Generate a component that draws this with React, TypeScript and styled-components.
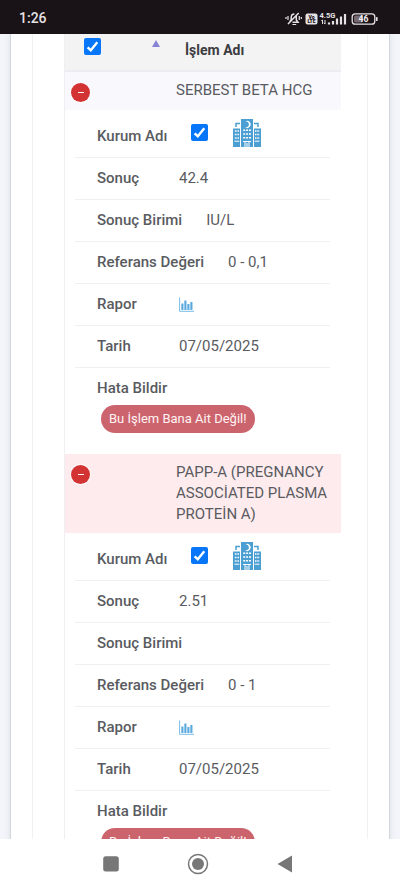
import React from "react";
import styled, { createGlobalStyle } from "styled-components";

const GlobalStyle = createGlobalStyle`
  *, *::before, *::after { box-sizing: border-box; }
  body {
    margin: 0;
    background: #f3f5fa;
    color: #595b61;
    font: 400 15px/21px Roboto, "Liberation Sans", sans-serif;
  }
`;

const Screen = styled.div`
  display: flex;
  flex-direction: column;
  height: 100vh;
  overflow: hidden;
`;

const StatusBar = styled.header`
  display: flex;
  align-items: center;
  justify-content: space-between;
  flex: none;
  height: 34px;
  padding: 3px 21px 0 19px;
  background: #191216;
  color: #e6e2e4;
`;

const Clock = styled.time`
  font-size: 14px;
  font-weight: 500;
`;

const StatusIcons = styled.svg`
  display: block;
  width: 94px;
  height: 18px;
`;

const Viewport = styled.main`
  flex: 1;
  min-height: 0;
  overflow: hidden;
  padding: 0 10px;
`;

const Page = styled.div`
  min-height: 100%;
  padding: 0 21px;
  background: #fff;
  border: solid #d3d6da;
  border-width: 0 1px;
  box-shadow: 0 0 6px rgba(60, 70, 90, 0.12);
`;

const Card = styled.section`
  padding: 0 26px 0 31px;
  border: solid #f0f1f3;
  border-width: 0 1px;
`;

const ResultTable = styled.table`
  width: 100%;
  table-layout: fixed;
  border-collapse: separate;
  border-spacing: 0;
  border-left: 1px solid #efeff2;
`;

const HeadCell = styled.th<{ $name?: boolean }>`
  width: ${(p) => (p.$name ? "auto" : "101px")};
  height: 38px;
  padding: ${(p) => (p.$name ? "5px 11px 9px 19px" : "4px 6px 10px 19px")};
  background: #f3f3f3;
  border-bottom: 2px solid #ececf2;
  color: #3c3c40;
  font-size: 14px;
  font-weight: 700;
  line-height: 22px;
  text-align: left;
  vertical-align: top;
`;

const HeadTools = styled.div`
  display: flex;
  align-items: flex-start;
  justify-content: space-between;
`;

const SortButton = styled.button`
  display: block;
  padding: 2px 0 0;
  border: 0;
  background: none;

  svg { display: block; }
`;

const Tick = styled.input`
  appearance: none;
  flex: none;
  width: 17px;
  height: 17px;
  margin: 0;
  border-radius: 2px;
  background: #c8c8c8;

  &:checked {
    background: #0876f8
      url("data:image/svg+xml,%3Csvg xmlns='http://www.w3.org/2000/svg' viewBox='0 0 17 17'%3E%3Cpath d='M3.6 9.3 6.8 12.2 13.3 4.2' fill='none' stroke='white' stroke-width='2.4'/%3E%3C/svg%3E");
  }
`;

const RowCell = styled.td<{ $tone: "plain" | "alert"; $name?: boolean }>`
  padding: ${(p) => (p.$name ? "8px 6px 8px 10px" : "11px 6px 8px 6px")};
  background: ${(p) => (p.$tone === "alert" ? "#feebed" : "#f8f8fd")};
  vertical-align: top;
`;

const CollapseButton = styled.button`
  display: grid;
  place-items: center;
  width: 19px;
  height: 19px;
  padding: 0;
  border: 0;
  border-radius: 50%;
  background: #d33333;
  box-shadow: 0 0 1px 1px rgba(255, 255, 255, 0.8);
`;

const Dash = styled.span`
  width: 6px;
  height: 1px;
  background: #fff;
`;

const DetailCell = styled.td`
  padding: 6px 11px 21px 10px;
  background: #fff;
`;

const Details = styled.ul`
  margin: 0;
  padding: 0;
  list-style: none;
`;

const Detail = styled.li`
  display: flex;
  align-items: center;
  gap: 24px;
  height: 42px;
  padding-left: 22px;
  border-bottom: 1px solid #f0f0f2;
`;

const Label = styled.label`
  min-width: 58px;
  font-weight: 500;
`;

const Institution = styled.span`
  display: flex;
  align-items: center;
  gap: 25px;
  height: 34px;
  margin-bottom: 8px;
`;

const IconButton = styled.button`
  display: block;
  padding: 0;
  border: 0;
  background: none;

  svg { display: block; }
`;

const Report = styled.li`
  padding: 10px 0 0 22px;
`;

const ReportTitle = styled.strong`
  display: block;
  font-weight: 500;
`;

const ReportButton = styled.button`
  display: block;
  height: 28px;
  margin: 6px 0 0 4px;
  padding: 0 8px;
  border: 0;
  border-radius: 14px;
  background: #cc646e;
  color: #fff3f3;
  font: 400 13px/28px Roboto, "Liberation Sans", sans-serif;
`;

const NavBar = styled.nav`
  display: flex;
  align-items: center;
  justify-content: space-around;
  flex: none;
  height: 49px;
  padding: 0 71px 0 67px;
  background: #fff;
`;

function PhoneStatus() {
  return (
    <StatusIcons viewBox="0 0 94 18" aria-hidden="true">
      <g fill="none" stroke="#e6e2e4" strokeWidth="1.5">
        <path d="M4.8 11.8 6.2 9.8V7.5C6.2 4.8 7.6 4 9.4 4M11.3 6V10L13 12.3H7.5M3 14 13.7 3" />
        <path d="M7.4 14.5H11.2M3 6V10M1 7V9M14.3 6V10M16.3 7V9" strokeWidth="1.2" />
      </g>
      <rect x="20.5" y="3.5" width="12" height="11" rx="2" fill="#e6e2e4" />
      <g fill="#191216" fontFamily="Roboto" fontWeight="900" fontSize="5" textAnchor="middle">
        <text x="26.5" y="8.5">Vo</text>
        <text x="26.5" y="13.4">LTE</text>
      </g>
      <text x="34.5" y="8" fill="#e6e2e4" fontFamily="Roboto" fontWeight="700" fontSize="7.5">4.5G</text>
      <path d="M37.5 14V10M36.4 11 37.5 9.7M40 10V14M38.9 12.8 40 14.1" stroke="#e6e2e4" />
      <path d="M44 14.5V12.5M48 14.5V11M52 14.5V8.5M56 14.5V6.5M60 14.5V4" stroke="#e6e2e4" strokeWidth="2.2" />
      <rect x="67.2" y="3.8" width="22.6" height="10.4" rx="3" fill="none" stroke="#e6e2e4" strokeWidth="1.3" />
      <rect x="69" y="5.5" width="9" height="7" rx="1.5" fill="#77696f" />
      <rect x="91" y="7" width="1.6" height="4" rx="0.6" fill="#e6e2e4" />
      <text x="78.5" y="12" fill="#f4f1f2" fontFamily="Roboto" fontWeight="700" fontSize="8.5" textAnchor="middle">46</text>
    </StatusIcons>
  );
}

function HospitalIcon() {
  return (
    <svg width="28" height="28" viewBox="0 0 28 28" aria-hidden="true">
      <path d="M8 0H20V28H8ZM0 9.5H7V28H0ZM21 9.5H28V28H21Z" fill="#4b9fd2" />
      <path d="M3 8V4.5H7M21 4.5H25V8" fill="none" stroke="#4b9fd2" strokeWidth="1.5" />
      <path d="M12 2.4A3.6 3.6 0 1 1 12 8.4A3.1 3.1 0 1 0 12 2.4Z" fill="#fff" />
      <g fill="none" stroke="#fff" strokeWidth="1.6">
        <path d="M10.2 11.3H18M10.2 15H18M10.2 18.7H18" strokeDasharray="2 0.9" />
        <path d="M1.8 12H6M1.8 15.5H6M1.8 19H6M22 12H26.2M22 15.5H26.2M22 19H26.2" strokeDasharray="1.1 0.5" />
      </g>
      <path d="M1.5 22.2H6.3M21.7 22.2H26.5M10 22.5H18M12 28V23M14 28V24M16 28V23" fill="none" stroke="#fff" strokeWidth="1" />
    </svg>
  );
}

function ChartIcon() {
  return (
    <svg width="15" height="15" viewBox="0 0 15 15" aria-hidden="true">
      <path d="M0.6 0.5V14.3H15" fill="none" stroke="#79bce8" />
      <path d="M3.4 13V6.5M6.4 13V3.5M9.4 13V7M12.4 13V5" fill="none" stroke="#59a9de" strokeWidth="2.1" />
    </svg>
  );
}

type Result = {
  id: string;
  name: string;
  tone: "plain" | "alert";
  value: string;
  unit: string;
  range: string;
  date: string;
};

const results: Result[] = [
  { id: "hcg", name: "SERBEST BETA HCG", tone: "plain", value: "42.4", unit: "IU/L", range: "0 - 0,1", date: "07/05/2025" },
  { id: "papp", name: "PAPP-A (PREGNANCY ASSOCİATED PLASMA PROTEİN A)", tone: "alert", value: "2.51", unit: "", range: "0 - 1", date: "07/05/2025" },
];

function ResultRows({ result }: { result: Result }) {
  const tickId = `${result.id}-kurum`;
  return (
    <>
      <tr>
        <RowCell $tone={result.tone}>
          <CollapseButton aria-label="Daralt" aria-expanded="true"><Dash /></CollapseButton>
        </RowCell>
        <RowCell $tone={result.tone} $name>{result.name}</RowCell>
      </tr>
      <tr>
        <DetailCell colSpan={2}>
          <Details>
            <Detail>
              <Label htmlFor={tickId}>Kurum Adı</Label>
              <Institution>
                <Tick id={tickId} type="checkbox" defaultChecked />
                <IconButton aria-label="Kurum"><HospitalIcon /></IconButton>
              </Institution>
            </Detail>
            <Detail><Label as="strong">Sonuç</Label><span>{result.value}</span></Detail>
            <Detail><Label as="strong">Sonuç Birimi</Label><span>{result.unit}</span></Detail>
            <Detail><Label as="strong">Referans Değeri</Label><span>{result.range}</span></Detail>
            <Detail>
              <Label as="strong">Rapor</Label>
              <IconButton aria-label="Rapor"><ChartIcon /></IconButton>
            </Detail>
            <Detail><Label as="strong">Tarih</Label><span>{result.date}</span></Detail>
            <Report>
              <ReportTitle>Hata Bildir</ReportTitle>
              <ReportButton>Bu İşlem Bana Ait Değil!</ReportButton>
            </Report>
          </Details>
        </DetailCell>
      </tr>
    </>
  );
}

export default function App() {
  return (
    <Screen>
      <GlobalStyle />
      <StatusBar>
        <Clock>1:26</Clock>
        <PhoneStatus />
      </StatusBar>
      <Viewport>
        <Page>
          <Card>
            <ResultTable>
              <thead>
                <tr>
                  <HeadCell>
                    <HeadTools>
                      <Tick type="checkbox" defaultChecked aria-label="Tümünü seç" />
                      <SortButton aria-label="Sırala">
                        <svg width="8" height="7" viewBox="0 0 8 7" aria-hidden="true">
                          <path d="M4 0 8 7H0Z" fill="#8583d6" />
                        </svg>
                      </SortButton>
                    </HeadTools>
                  </HeadCell>
                  <HeadCell $name>İşlem Adı</HeadCell>
                </tr>
              </thead>
              <tbody>
                {results.map((result) => <ResultRows key={result.id} result={result} />)}
              </tbody>
            </ResultTable>
          </Card>
        </Page>
      </Viewport>
      <NavBar>
        <IconButton aria-label="Son uygulamalar">
          <svg width="22" height="22" viewBox="0 0 22 22"><rect x="3.2" y="3.2" width="15.6" height="15.2" rx="2.5" fill="#777" /></svg>
        </IconButton>
        <IconButton aria-label="Ana ekran">
          <svg width="22" height="22" viewBox="0 0 22 22"><circle cx="11" cy="11" r="9.5" fill="none" stroke="#777" strokeWidth="1.5" /><circle cx="11" cy="11" r="6" fill="#777" /></svg>
        </IconButton>
        <IconButton aria-label="Geri">
          <svg width="22" height="22" viewBox="0 0 22 22"><path d="M3.5 11 18 2.5V19.5Z" fill="#777" /></svg>
        </IconButton>
      </NavBar>
    </Screen>
  );
}
